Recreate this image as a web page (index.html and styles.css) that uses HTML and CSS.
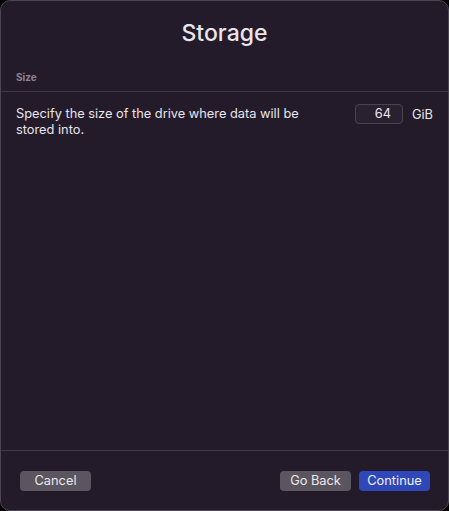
FILE: index.html
```html
<!DOCTYPE html>
<html>
<head>
<meta charset="utf-8">
<link rel="stylesheet" href="styles.css">
</head>
<body>
<div class="window">
  <h1 class="title">Storage</h1>
  <div class="section-label">Size</div>
  <div class="content">
    <div class="row">
      <p class="desc">Specify the size of the drive where data will be stored into.</p>
      <div class="field">
        <div class="input">64</div>
        <span class="unit">GiB</span>
      </div>
    </div>
  </div>
  <div class="footer">
    <button class="btn">Cancel</button>
    <div class="right">
      <button class="btn">Go Back</button>
      <button class="btn primary">Continue</button>
    </div>
  </div>
</div>
</body>
</html>
```
FILE: styles.css
```css
html, body {
  margin: 0;
  padding: 0;
  background: #000;
  width: 449px;
  height: 511px;
  overflow: hidden;
}
.window {
  box-sizing: border-box;
  width: 449px;
  height: 511px;
  background: #241b2a;
  border: 1px solid #4c4652;
  border-radius: 10px;
  display: flex;
  flex-direction: column;
  font-family: "Inter", "Liberation Sans", sans-serif;
  color: #e6e3e8;
}
.title {
  margin: 0;
  padding-top: 16px;
  height: 34px;
  text-align: center;
  font-size: 23px;
  font-weight: 500;
  line-height: 32px;
  color: #e8e6ea;
}
.section-label {
  margin-top: 20px;
  padding: 0 15px 7px;
  font-size: 10px;
  font-weight: 700;
  color: #8b8590;
  border-bottom: 1px solid #3f3746;
  line-height: 13px;
}
.content {
  flex: 1;
  padding: 14px 15px 0;
  border-bottom: 1px solid #3f3746;
}
.row {
  display: flex;
  align-items: flex-start;
  justify-content: space-between;
}
.desc {
  margin: 0;
  width: 320px;
  font-size: 12.8px;
  line-height: 16px;
  color: #e8e6ea;
}
.field {
  display: flex;
  align-items: center;
  gap: 9px;
  margin-top: -2px;
}
.input {
  box-sizing: border-box;
  width: 48px;
  height: 20px;
  border: 1px solid #4a4350;
  border-radius: 4px;
  background: #2a2130;
  text-align: right;
  padding-right: 11px;
  font-size: 12.8px;
  line-height: 18px;
  color: #ece9ee;
}
.unit {
  font-size: 12.8px;
  color: #e8e6ea;
}
.footer {
  box-sizing: border-box;
  flex: 0 0 59px;
  height: 59px;
  display: flex;
  align-items: flex-start;
  justify-content: space-between;
  padding: 20px 18px 0 19px;
}
.right {
  display: flex;
  gap: 8px;
}
.btn {
  width: 71px;
  height: 20px;
  border: none;
  border-radius: 4px;
  background: #5b555f;
  color: #ebe8ed;
  font-family: "Inter", "Liberation Sans", sans-serif;
  font-size: 12.8px;
  padding: 0;
  line-height: 20px;
}
.btn.primary {
  background: #2f47b8;
  color: #f0f0f8;
}
```
